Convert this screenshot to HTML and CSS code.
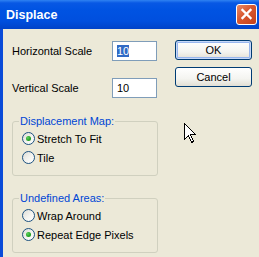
FILE: index.html
```html
<!DOCTYPE html>
<html lang="en">
<head>
    <meta charset="UTF-8">
    <title>Displace</title>
    <link rel="stylesheet" href="styles.css">
</head>
<body>

    <div class="window">
        <!-- Title bar -->
        <div class="titlebar">
            <span class="title">Displace</span>
            <button class="close-btn" aria-label="Close">
                <svg width="21" height="21" viewBox="0 0 21 21">
                    <path d="M6.5 6 L14.5 14 M14.5 6 L6.5 14" stroke="#fff" stroke-width="2.4" stroke-linecap="square" fill="none"/>
                </svg>
            </button>
        </div>

        <div class="frame">
            <div class="main">
                <div class="field">
                    <label>Horizontal Scale</label>
                    <div class="textbox"><span class="selected">10</span></div>
                </div>
                <div class="field">
                    <label>Vertical Scale</label>
                    <div class="textbox"><span>10</span></div>
                </div>

                <fieldset class="group">
                    <legend>Displacement Map:</legend>
                    <div class="radio"><span class="dot checked"></span>Stretch To Fit</div>
                    <div class="radio"><span class="dot"></span>Tile</div>
                </fieldset>

                <fieldset class="group second">
                    <legend>Undefined Areas:</legend>
                    <div class="radio"><span class="dot"></span>Wrap Around</div>
                    <div class="radio"><span class="dot checked"></span>Repeat Edge Pixels</div>
                </fieldset>
            </div>

            <div class="buttons">
                <button class="btn default">OK</button>
                <button class="btn">Cancel</button>
            </div>
        </div>

        <!-- mouse pointer -->
        <svg class="pointer" width="13" height="21" viewBox="0 0 13 21">
            <path d="M0.5 0.5 V16.5 L4.5 12.5 L7.5 19.5 L9.5 18.5 L6.5 11.5 H11.5 Z" fill="#fff" stroke="#000" stroke-width="1" shape-rendering="crispEdges"/>
        </svg>
    </div>

</body>
</html>
```

FILE: styles.css
```css
body {
    margin: 0;
    background-color: #ece9d8;
    font-family: "Liberation Sans", Arial, sans-serif;
    font-size: 11px;
    color: #000;
    overflow: hidden;
}

.window {
    position: relative;
    width: 259px;
    height: 257px;
    display: flex;
    flex-direction: column;
}

.titlebar {
    height: 29px;
    box-sizing: border-box;
    display: flex;
    align-items: center;
    justify-content: space-between;
    padding: 0 2px 0 6px;
    background: linear-gradient(#2f82f2 0, #0858e4 3px, #0053e2 10px, #004fde 21px, #0042c8 29px);
}

.title {
    color: white;
    font-weight: bold;
    font-size: 12.5px;
    padding-top: 1px;
}

.close-btn {
    width: 21px;
    height: 21px;
    padding: 0;
    border: 1px solid #fff;
    border-radius: 3px;
    background: linear-gradient(135deg, #e88a68 0, #d8572f 45%, #c2401c 100%);
    display: flex;
    align-items: center;
    justify-content: center;
}

.close-btn svg {
    display: block;
    margin: -1px;
}

.frame {
    flex: 1;
    display: flex;
    gap: 17px;
    border-left: 3px solid #0a4bd8;
    padding: 11px 0 0 9px;
}

.main {
    width: 146px;
    padding-top: 1px;
}

.field {
    display: flex;
    align-items: center;
    justify-content: space-between;
    height: 20px;
    margin-bottom: 17px;
    padding-right: 1px;
}

.textbox {
    width: 45px;
    height: 20px;
    box-sizing: border-box;
    border: 1px solid #7f9db9;
    background: white;
    padding: 2px 0 0 4px;
    line-height: 14px;
}

.selected {
    background-color: #316ac5;
    color: white;
}

.group {
    margin: 13px 0 0 0;
    padding: 1px 6px 8px 6px;
    border: 1px solid #d0d0bf;
    border-radius: 3px;
    min-inline-size: 0;
}

.group.second {
    margin-top: 16px;
}

.group legend {
    padding: 0 1px;
    color: #0046d5;
    line-height: 13px;
}

.radio {
    display: flex;
    align-items: center;
    gap: 2px;
    height: 19px;
    margin-left: 3px;
}

.dot {
    width: 13px;
    height: 13px;
    box-sizing: border-box;
    border: 1px solid #1c5180;
    border-radius: 50%;
    background: linear-gradient(135deg, #dcdcd6 0, #f4f4f0 55%, #ffffff 100%);
    display: flex;
    align-items: center;
    justify-content: center;
}

.dot.checked::after {
    content: "";
    width: 5px;
    height: 5px;
    border-radius: 50%;
    background: radial-gradient(circle at 35% 35%, #5ed05e, #21a121 60%, #1a8a1a);
}

.buttons {
    width: 77px;
    display: flex;
    flex-direction: column;
    gap: 7px;
}

.btn {
    width: 77px;
    height: 20px;
    padding: 0;
    border: 1px solid #003c74;
    border-radius: 3px;
    background: linear-gradient(#ffffff 0, #f4f4f0 60%, #e2dfd4 100%);
    font-family: "Liberation Sans", Arial, sans-serif;
    font-size: 11px;
    color: #000;
}

.btn.default {
    box-shadow: inset 0 0 0 1px #c6d8f8, inset 0 0 0 2px #98b6ee;
}

.pointer {
    position: absolute;
    left: 184px;
    top: 123px;
}
```
